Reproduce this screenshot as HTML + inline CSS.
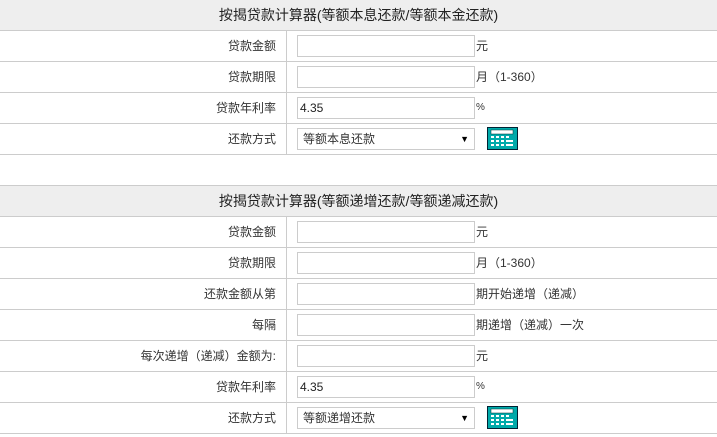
<!DOCTYPE html>
<html><head><meta charset="utf-8"><style>
*{margin:0;padding:0;box-sizing:border-box}
body{width:717px;height:437px;background:#fff;font-family:"Liberation Sans","Noto Sans CJK SC",sans-serif;font-size:12px;color:#333;position:relative;overflow:hidden}
.h{position:absolute;left:0;width:717px;height:31px;background:#eee;border-bottom:1px solid #ccc;text-align:center;line-height:30px;font-size:14px;color:#222}
.r{position:absolute;left:0;width:717px;height:31px;border-bottom:1px solid #ccc}
.l{position:absolute;left:0;width:276px;text-align:right;line-height:30px;top:0}
.d{position:absolute;left:286px;top:0;width:1px;height:30px;background:#ccc}
.i{position:absolute;left:297px;top:4px;width:178px;height:22px;border:1px solid #ccc;line-height:20px;padding-left:2px;color:#222;font-size:12px}
.u{position:absolute;left:476px;top:0;line-height:30px}
.s{position:absolute;left:297px;top:4px;width:178px;height:22px;border:1px solid #ccc;line-height:20px;padding-left:5px;color:#333}
.s:after{content:"▼";position:absolute;right:5px;top:0;font-size:9px;color:#000}
.c{position:absolute;left:487px;top:3px;width:30px;height:22px;background:#0aa;border:1px solid #024;box-shadow:inset 1px 1px 0 #7ee}
</style></head><body>
<div class="h" style="top:0">按揭贷款计算器(等额本息还款/等额本金还款)</div>
<div class="r" style="top:31px"><div class="l">贷款金额</div><div class="d"></div><div class="i"></div><div class="u">元</div></div>
<div class="r" style="top:62px"><div class="l">贷款期限</div><div class="d"></div><div class="i"></div><div class="u">月（1-360）</div></div>
<div class="r" style="top:93px"><div class="l">贷款年利率</div><div class="d"></div><div class="i">4.35</div><div class="u" style="font-size:10px">%</div></div>
<div class="r" style="top:124px"><div class="l">还款方式</div><div class="d"></div><div class="s">等额本息还款</div>
<svg class="" style="position:absolute;left:487px;top:3px" width="31" height="23" viewBox="0 0 31 23"><rect x="0.5" y="0.5" width="30" height="22" fill="#0aa" stroke="#023"/><rect x="4" y="3" width="22" height="4" fill="#fff" stroke="#033" stroke-width=".5"/><g fill="#fff"><rect x="4" y="9" width="3" height="2"/><rect x="9" y="9" width="3" height="2"/><rect x="14" y="9" width="3" height="2"/><rect x="19" y="9" width="3" height="2"/><rect x="4" y="13" width="3" height="2"/><rect x="9" y="13" width="3" height="2"/><rect x="14" y="13" width="3" height="2"/><rect x="19" y="13" width="7" height="2"/><rect x="4" y="17" width="3" height="2"/><rect x="9" y="17" width="3" height="2"/><rect x="14" y="17" width="3" height="2"/><rect x="19" y="17" width="7" height="2"/></g></svg></div>

<div class="h" style="top:185px;border-top:1px solid #ccc;height:32px">按揭贷款计算器(等额递增还款/等额递减还款)</div>
<div class="r" style="top:217px"><div class="l">贷款金额</div><div class="d"></div><div class="i"></div><div class="u">元</div></div>
<div class="r" style="top:248px"><div class="l">贷款期限</div><div class="d"></div><div class="i"></div><div class="u">月（1-360）</div></div>
<div class="r" style="top:279px"><div class="l">还款金额从第</div><div class="d"></div><div class="i"></div><div class="u">期开始递增（递减）</div></div>
<div class="r" style="top:310px"><div class="l">每隔</div><div class="d"></div><div class="i"></div><div class="u">期递增（递减）一次</div></div>
<div class="r" style="top:341px"><div class="l">每次递增（递减）金额为:</div><div class="d"></div><div class="i"></div><div class="u">元</div></div>
<div class="r" style="top:372px"><div class="l">贷款年利率</div><div class="d"></div><div class="i">4.35</div><div class="u" style="font-size:10px">%</div></div>
<div class="r" style="top:403px"><div class="l">还款方式</div><div class="d"></div><div class="s">等额递增还款</div>
<svg style="position:absolute;left:487px;top:3px" width="31" height="23" viewBox="0 0 31 23"><rect x="0.5" y="0.5" width="30" height="22" fill="#0aa" stroke="#023"/><rect x="4" y="3" width="22" height="4" fill="#fff" stroke="#033" stroke-width=".5"/><g fill="#fff"><rect x="4" y="9" width="3" height="2"/><rect x="9" y="9" width="3" height="2"/><rect x="14" y="9" width="3" height="2"/><rect x="19" y="9" width="3" height="2"/><rect x="4" y="13" width="3" height="2"/><rect x="9" y="13" width="3" height="2"/><rect x="14" y="13" width="3" height="2"/><rect x="19" y="13" width="7" height="2"/><rect x="4" y="17" width="3" height="2"/><rect x="9" y="17" width="3" height="2"/><rect x="14" y="17" width="3" height="2"/><rect x="19" y="17" width="7" height="2"/></g></svg></div>
</body></html>
